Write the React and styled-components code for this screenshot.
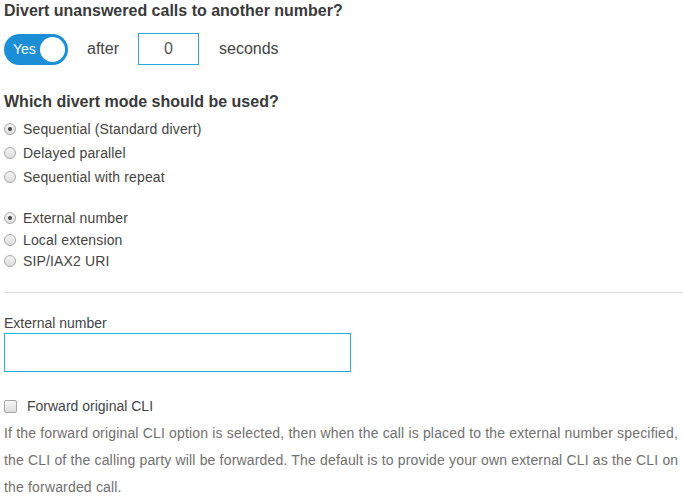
import React, { useState } from "react";
import styled, { createGlobalStyle } from "styled-components";

const Global = createGlobalStyle`
  html, body { margin: 0; padding: 0; background: #fff; }
  body { font-family: "Liberation Sans", Arial, sans-serif; color: #444; }
  * { box-sizing: border-box; }
`;

const Page = styled.div`
  width: 683px;
  padding: 0 0 0 4px;
  display: flex;
  flex-direction: column;
`;

const Heading = styled.div`
  font-size: 16px;
  font-weight: bold;
  color: #3a3a3a;
  line-height: 22px;
  margin-top: ${(p) => p.$mt || 0}px;
`;

const ToggleRow = styled.div`
  display: flex;
  align-items: center;
  margin-top: 11px;
  height: 32px;
  font-size: 16px;
  color: #444;
`;

const Toggle = styled.div`
  width: 64px;
  height: 31px;
  border-radius: 16px;
  background: #1b8ed6;
  display: flex;
  align-items: center;
  justify-content: space-between;
  padding: 0 3px 0 9px;
  color: #fff;
  font-size: 14px;
`;

const Knob = styled.span`
  width: 25px;
  height: 25px;
  border-radius: 50%;
  background: #fff;
`;

const Word = styled.span`
  margin-left: ${(p) => p.$ml}px;
`;

const SmallInput = styled.input`
  width: 61px;
  height: 32px;
  margin-left: 19px;
  border: 1px solid #2aa8dc;
  text-align: center;
  font: 16px "Liberation Sans", Arial, sans-serif;
  color: #555;
  outline: none;
  padding: 0;
`;

const Group = styled.div`
  display: flex;
  flex-direction: column;
  margin-top: ${(p) => p.$mt}px;
`;

const Option = styled.label`
  display: flex;
  align-items: center;
  height: ${(p) => p.$h}px;
  font-size: 14px;
  letter-spacing: 0.15px;
  color: #444;
  cursor: pointer;
`;

const Radio = styled.span`
  width: 12px;
  height: 12px;
  border-radius: 50%;
  border: 1px solid #a9a9a9;
  background: linear-gradient(#f4f4f4, #dcdcdc);
  margin-right: 7px;
  display: flex;
  align-items: center;
  justify-content: center;
  &::after {
    content: "";
    width: 4px;
    height: 4px;
    border-radius: 50%;
    background: #444;
    display: ${(p) => (p.$on ? "block" : "none")};
  }
`;

const Rule = styled.hr`
  border: 0;
  border-top: 1px solid #dcdcdc;
  margin: 20px 0 0 0;
  width: 679px;
  height: 0;
`;

const Label = styled.div`
  font-size: 14px;
  color: #444;
  line-height: 20px;
  margin-top: 20px;
`;

const WideInput = styled.input`
  width: 347px;
  height: 39px;
  border: 1px solid #1fb0e2;
  outline: none;
  font: 14px "Liberation Sans", Arial, sans-serif;
  padding: 0 8px;
`;

const CheckRow = styled.label`
  display: flex;
  align-items: center;
  margin-top: 27px;
  height: 14px;
  font-size: 14px;
  color: #444;
`;

const Check = styled.span`
  width: 13px;
  height: 13px;
  border: 1px solid #a6a6a6;
  border-radius: 2px;
  background: linear-gradient(#f6f6f6, #dedede);
  margin-right: 10px;
`;

const Help = styled.p`
  margin: 7px 0 0 0;
  font-size: 14px;
  letter-spacing: 0.17px;
  line-height: 27px;
  color: #707070;
  width: 679px;
`;

const modes = ["Sequential (Standard divert)", "Delayed parallel", "Sequential with repeat"];
const targets = ["External number", "Local extension", "SIP/IAX2 URI"];

export default function App() {
  const [mode, setMode] = useState(0);
  const [target, setTarget] = useState(0);
  return (
    <Page>
      <Global />
      <Heading>Divert unanswered calls to another number?</Heading>
      <ToggleRow>
        <Toggle>
          Yes
          <Knob />
        </Toggle>
        <Word $ml={19}>after</Word>
        <SmallInput defaultValue="0" />
        <Word $ml={20}>seconds</Word>
      </ToggleRow>
      <Heading $mt={26}>Which divert mode should be used?</Heading>
      <Group $mt={4}>
        {modes.map((m, i) => (
          <Option key={m} $h={24} onClick={() => setMode(i)}>
            <Radio $on={mode === i} />
            {m}
          </Option>
        ))}
      </Group>
      <Group $mt={18}>
        {targets.map((m, i) => (
          <Option key={m} $h={21.7} onClick={() => setTarget(i)}>
            <Radio $on={target === i} />
            {m}
          </Option>
        ))}
      </Group>
      <Rule />
      <Label>External number</Label>
      <WideInput />
      <CheckRow>
        <Check />
        Forward original CLI
      </CheckRow>
      <Help>
        If the forward original CLI option is selected, then when the call is placed to the external number specified,
        the CLI of the calling party will be forwarded. The default is to provide your own external CLI as the CLI on
        the forwarded call.
      </Help>
    </Page>
  );
}
